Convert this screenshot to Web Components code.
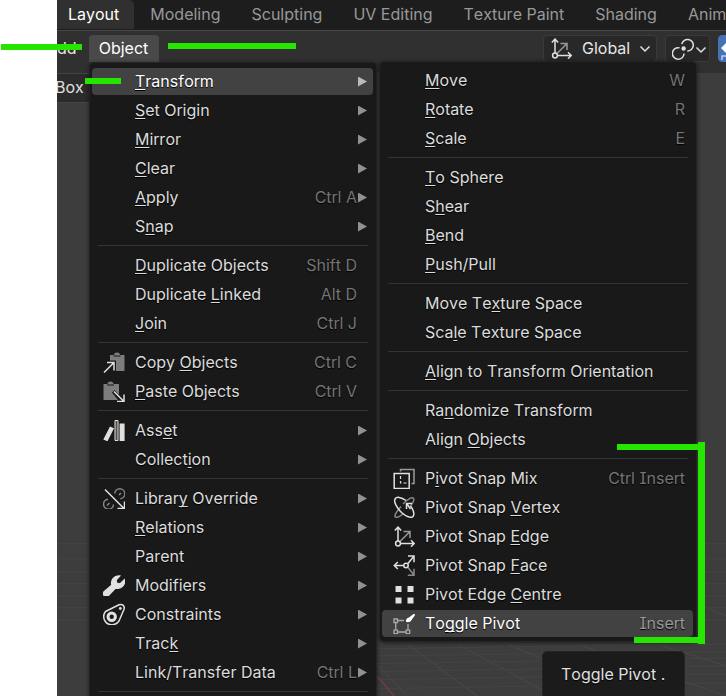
<!DOCTYPE html>
<html lang="en">
<head>
<meta charset="utf-8">
<title>Object menu</title>
<style>
  html, body { margin: 0; height: 100%; overflow: hidden; background: #fff; }
  body {
    font: 16px/20px Inter, "Noto Sans", sans-serif;
    font-kerning: none;
    color: #e0e0e0;
  }
</style>
</head>
<body>
<app-page></app-page>

<script>
const ICONS = {
  copy: `<path fill="#7d7d7d" stroke="none" d="M7 4h4q0-2.500 3-2.500t3 2.500h4.500v16H13V9.500H7z"/><path stroke="#191919" stroke-width="1" d="M10.500 5h7"/><path d="M1 21.500 11 11.500M4 11.500h7v8"/>`,
  paste: `<path fill="#7d7d7d" stroke="none" d="M.5 4h4q0-2.500 3-2.500t3 2.500H16v11l-4.500-5-2.500 2.500 6 7.500H.5z"/><path stroke="#191919" stroke-width="1" d="M4 5h7"/><path d="M11 11.500l10 10M14 21.500h7v-7"/>`,
  asset: `<path fill="#e0e0e0" stroke="none" d="M7 7.500l4 1.800L4.500 22.300.3 20.500zM16.600 4.500h5V22h-5z"/><path stroke-width="1" fill="#584c42" d="M12 1.500h3v20h-3z"/>`,
  library: `<g stroke="#858585"><path d="M11.800 6.500a5 5 0 1 1 5.500 5.300M16 8l2-2M10.500 17.500a5 5 0 1 1-5.500-5.300M4 18.500l2.500-2.500"/></g><path d="M2 2.500l19 19M14.500 21.500h7v-7"/>`,
  wrench: `<path fill="#e0e0e0" d="M1.400 21.600a2.600 2.600 0 0 1 0-4L9 11C7.500 6.500 11 1.500 16.500 2L13 6l.5 3.200L17 10l4.300-4c1.200 5-3.800 9.500-8.800 8L5.500 21.300a2.700 2.700 0 0 1-4.100.3z"/>`,
  constraint: `<path d="M2.500 8.500 16 1.800c3.500-1.300 6 1.300 5 4.500L16 18C12.500 23 5 23 2 18c-1.800-3.300-1.500-7 .5-9.500z"/><circle cx="8.700" cy="13.700" r="3.700" stroke-width="3"/><circle cx="17.300" cy="5.500" r="1.400" fill="#e0e0e0" stroke="none"/>`,
  mix: `<path stroke="#999" d="M7.500 4.500V2.500H21v14h-2.500"/><path d="M1.200 6.500h15v15h-15z"/><path stroke-dasharray="3 2" stroke-width="1.200" d="M7.500 9v7h7"/>`,
  vertex: `<path stroke="#888" d="M10 8C14 3.500 19 .5 20.500 2.500c1 1.500-1 5-3 7.500M8 10.500C4 15 .5 20 2.500 21c2 1 5-1 8-3.500"/><path d="M13 4.500C8 .8 3.500.5 2 3 .5 6 4 12 8.500 16.500 13 20.500 18 22.500 20 20.500c1.500-2 .8-6-2.500-10.500M14 8l3.500 5M13.500 13V7.500H19"/>`,
  axes: `<path stroke="#999" d="M7 16.500l9.500-9.500M10.500 6.500H17V13"/><path d="M5 16V2.500M1.800 5.500 5 2.200l3.200 3.300M7.500 18.500H21M18 15.300l3.200 3.200-3.200 3.200"/><circle cx="5" cy="18.500" r="2.400"/>`,
  face: `<path stroke="#888" d="M15 13.500l6 7.500M14.800 21.300H21v-6.500"/><path d="M10.800 11.500H1.500M4.800 8 1.300 11.500 4.800 15M14.700 9.700l6-7.200M15 2h6v6.300"/><circle cx="13" cy="11.500" r="2.200"/>`,
  squares: `<path fill="#e0e0e0" stroke="none" d="M2.500 3h6v6h-6zM14.500 3h6v6h-6zM2.500 14.500h6v6h-6zM14.500 14.500h6v6h-6z"/>`,
  toggle: `<g stroke="#aaa" stroke-width="1.300"><path d="M4.500 8.500H11M2.700 10.500v7.500M4.500 20H13M15 12v6"/><path d="M1 7h3.500v3.500H1zM1 18.200h3.500v3.500H1zM13.200 18.200h3.500v3.500h-3.500z"/></g><path fill="#fff" stroke="none" d="M13 9.800c-.5-2.300 1-3.800 3-4.300L20.500 2h1.300v1.500L18.500 8c-1 1.800-3.300 3-5.500 1.800z"/>`,
  pivot: `<path d="M9.800 6.200a5.800 5.800 0 1 1 5.500 6.800M7.500 9.800A5.800 5.800 0 1 0 12 15.500"/><circle cx="11.600" cy="10.500" r="2.200" fill="#e0e0e0" stroke="none"/>`,
  chevron: `<path d="M6.500 9.500l4.500 4.500 4.500-4.500"/>`,
  magnet: `<path fill="#fff" stroke="none" d="M2 10l5-5 6 6-5 5zM7 4l3-3 4 4-3 3z"/><path stroke="#b9ccec" d="M3 22v-4h8v4"/>`
};

const define = (name, html, setup) => {
  const template = document.createElement('template');
  template.innerHTML = html;
  customElements.define(name, class extends HTMLElement {
    constructor() {
      super();
      this.attachShadow({ mode: 'open' }).append(template.content.cloneNode(true));
    }
    connectedCallback() { if (setup) setup(this, this.shadowRoot); }
  });
};

define('ui-icon', `
  <style>
    :host { display: block; width: 22px; height: 22px; }
    svg { display: block; fill: none; stroke: #e0e0e0; stroke-width: 1.500; }
  </style>
  <svg viewBox="0 0 22 22" width="22" height="22" aria-hidden="true"></svg>`,
  (el, root) => { root.querySelector('svg').innerHTML = ICONS[el.getAttribute('name')] || ''; });

define('menu-item', `
  <style>
    :host { display: block; padding: 1px 0; }
    button {
      display: grid; grid-template-columns: 22px 1fr auto var(--arrow-column, 10px);
      align-items: center; width: 100%; height: 27px;
      padding: 0 6px 2px 11px; border: 0; border-radius: 4px;
      background: none; color: #dcdcdc; font: inherit; font-kerning: inherit;
      text-align: left; text-shadow: 0 1px 1px #000; white-space: nowrap;
    }
    :host([active]) button { background: #424242; color: #fff; }
    .label { padding-left: 10px; }
    .key { color: #747474; font-feature-settings: "cv08"; }
    :host([active]) .key { color: #999; }
    .arrow { justify-self: end; width: 9px; height: 10px; margin-top: 2px; background: #919191; clip-path: polygon(0 0, 100% 50%, 0 100%); }
    :host([active]) .arrow { background: #bbb; }
    :host(:not([submenu])) .arrow { visibility: hidden; }
    ::slotted(u) { text-decoration: underline 1px; text-decoration-skip-ink: none; text-underline-offset: 2px; }
  </style>
  <button type="button" role="menuitem"><ui-icon></ui-icon><span class="label"><slot></slot></span><span class="key"></span><span class="arrow"></span></button>`,
  (el, root) => {
    root.querySelector('.key').textContent = el.getAttribute('key') || '';
    const icon = root.querySelector('ui-icon');
    icon.setAttribute('name', el.getAttribute('icon') || '');
    icon.connectedCallback();
  });

define('menu-line', `
  <style>:host { display: block; height: 1px; margin: 4px 5px 5px 6px; background: #343434; }</style>`);

define('menu-panel', `
  <style>
    :host {
      display: block; box-sizing: border-box; padding: 4px 3px 3px 2px;
      background: #191919; border: 1px solid #242424; border-radius: 5px;
      box-shadow: 0 1px 4px #0008;
    }
    :host([flat]) { --arrow-column: 2px; }
  </style>
  <div role="menu"><slot></slot></div>`);

define('workspace-tab', `
  <style>
    :host { display: block; flex: none; }
    button {
      height: 29px; padding: 0 15px 2px; border: 0; border-radius: 5px 5px 0 0; background: none;
      color: #989898; font: inherit; font-kerning: inherit; white-space: nowrap;
    }
    :host([active]) button { background: #303030; color: #fff; }
  </style>
  <button type="button" role="tab"><slot></slot></button>`);

define('workspace-tabs', `
  <style>
    :host { display: flex; gap: 1px; height: 30px; background: #1d1d1d; overflow: hidden; }
    ::slotted(:first-child) { margin-left: -4px; }
  </style>
  <slot></slot>`);

define('view-header', `
  <style>
    :host { display: flex; align-items: flex-start; height: 38px; padding-top: 4px; background: #303030; border-top: 1px solid #484848; overflow: hidden; }
    nav { display: flex; gap: 1px; margin-left: -21px; }
    button, select { height: 27px; border: 0; color: #e6e6e6; font: inherit; font-kerning: inherit; }
    nav button { padding: 0 11px 2px 10px; background: none; border-radius: 4px 4px 0 0; }
    nav button.open { background: #494949; color: #fff; }
    .tools { display: flex; gap: 8px; margin-left: auto; margin-right: -20px; }
    .tools button, .orient { background: #282828; border: 1px solid #3a3a3a; border-radius: 4px; box-sizing: border-box; height: 27px; }
    .orient { display: grid; grid-template-columns: 22px 1fr 22px; align-items: center; padding: 0 0 2px 6px; }
    .orient > ui-icon, .orient select { grid-row: 1; }
    .orient ui-icon.first { grid-column: 1; }
    .orient ui-icon.last { grid-column: 3; pointer-events: none; }
    select { grid-column: 2 / 4; appearance: none; background: none; height: 23px; padding: 0 25px 0 10px; }
    .tools button { display: flex; align-items: center; padding: 0; }
    .tools .pivot { padding: 0 0 0 6px; width: 45px; overflow: hidden; }
    .pivot ui-icon + ui-icon { margin-left: -4px; }
    .tools .snap { background: #4772b3; border-color: #4772b3; width: 28px; }
  </style>
  <nav><button type="button">Add</button><button type="button" class="open" aria-haspopup="menu" aria-expanded="true">Object</button></nav>
  <div class="tools">
    <div class="orient">
      <ui-icon class="first" name="axes"></ui-icon>
      <select aria-label="Transform orientation"><option>Global</option></select>
      <ui-icon class="last" name="chevron"></ui-icon>
    </div>
    <button type="button" class="pivot" aria-label="Pivot point"><ui-icon name="pivot"></ui-icon><ui-icon name="chevron"></ui-icon></button>
    <button type="button" class="snap" aria-label="Snap"><ui-icon name="magnet"></ui-icon></button>
  </div>`);

define('view-port', `
  <style>
    :host { display: flex; flex-direction: column; min-height: 0; overflow: hidden; background: #3d3d3d; }
    .tool { display: flex; align-items: center; flex: none; width: 60px; height: 26px; padding-bottom: 2px; background: #2b2b2b; border: solid #454545; border-width: 1px 0; }
    .tool span { margin-left: -2px; }
    svg { flex: 1; min-height: 0; width: 100%; }
  </style>
  <div class="tool"><span>Box</span></div>
  <svg viewBox="0 0 669 592" preserveAspectRatio="none" fill="none" aria-hidden="true">
    <path stroke="#474747" d="M300 540l50 52M350 540l70 52M400 540l96 52M450 540l122 52M520 540l149 52M600 540l69 22M640 500l29 12"/>
    <path stroke="#444" d="M0 440h669M0 455h669M0 468h669M0 480h669M0 492h669M0 504h669M0 516h669M300 545l369-5M300 552l369-4M300 560l369-6M300 568l369-6M300 576l369-6M300 585l369-6"/>
    <path stroke="#8f3a44" d="M320 572l17 20"/>
  </svg>`);

define('tool-tip', `
  <style>:host { display: block; box-sizing: border-box; padding: 12px 19px 14px 18px; background: #1b1b1b; border: 1px solid #242424; border-radius: 5px; text-shadow: 0 1px 1px #000; white-space: nowrap; }</style>
  <slot></slot>`);

define('mark-stroke', `
  <style>:host { display: block; background: #26e600; }</style>`);

define('app-page', `
  <style>
    :host { display: grid; grid-template-columns: 57px 1fr; height: 100%; position: relative; overflow: hidden; }
    main { grid-column: 2; display: grid; grid-template-rows: auto auto 1fr; min-width: 0; min-height: 0; background: #303030; overflow: hidden; }
    menu-panel, tool-tip, mark-stroke { position: absolute; }
    .object { left: 89px; top: 62px; width: 288px; }
    .transform { left: 379px; top: 61px; width: 318px; }
    tool-tip { left: 542px; top: 651px; }
    .m1 { left: 1px; top: 44px; width: 81px; height: 6px; }
    .m2 { left: 168px; top: 43px; width: 128px; height: 6px; }
    .m3 { left: 85px; top: 78px; width: 36px; height: 6px; }
    .m4 { left: 617px; top: 444px; width: 84px; height: 6px; }
    .m5 { left: 698px; top: 442px; width: 7px; height: 202px; }
    .m6 { left: 634px; top: 637px; width: 66px; height: 6px; }
  </style>
  <main>
    <workspace-tabs role="tablist">
      <workspace-tab active>Layout</workspace-tab><workspace-tab>Modeling</workspace-tab><workspace-tab>Sculpting</workspace-tab><workspace-tab>UV Editing</workspace-tab><workspace-tab>Texture Paint</workspace-tab><workspace-tab>Shading</workspace-tab><workspace-tab>Animation</workspace-tab>
    </workspace-tabs>
    <view-header></view-header>
    <view-port></view-port>
  </main>
  <menu-panel class="object">
    <menu-item submenu active><u>T</u>ransform</menu-item>
    <menu-item submenu><u>S</u>et Origin</menu-item>
    <menu-item submenu><u>M</u>irror</menu-item>
    <menu-item submenu><u>C</u>lear</menu-item>
    <menu-item submenu key="Ctrl A"><u>A</u>pply</menu-item>
    <menu-item submenu>S<u>n</u>ap</menu-item>
    <menu-line></menu-line>
    <menu-item key="Shift D"><u>D</u>uplicate Objects</menu-item>
    <menu-item key="Alt D">Duplicate <u>L</u>inked</menu-item>
    <menu-item key="Ctrl J"><u>J</u>oin</menu-item>
    <menu-line></menu-line>
    <menu-item icon="copy" key="Ctrl C">Copy <u>O</u>bjects</menu-item>
    <menu-item icon="paste" key="Ctrl V"><u>P</u>aste Objects</menu-item>
    <menu-line></menu-line>
    <menu-item icon="asset" submenu>Ass<u>e</u>t</menu-item>
    <menu-item submenu>Collect<u>i</u>on</menu-item>
    <menu-line></menu-line>
    <menu-item icon="library" submenu>Librar<u>y</u> Override</menu-item>
    <menu-item submenu><u>R</u>elations</menu-item>
    <menu-item submenu>Parent</menu-item>
    <menu-item icon="wrench" submenu>Modifiers</menu-item>
    <menu-item icon="constraint" submenu>Constraints</menu-item>
    <menu-item submenu>Trac<u>k</u></menu-item>
    <menu-item submenu key="Ctrl L">Link/Transfer Data</menu-item>
    <menu-line></menu-line>
  </menu-panel>
  <menu-panel class="transform" flat>
    <menu-item key="W"><u>M</u>ove</menu-item>
    <menu-item key="R"><u>R</u>otate</menu-item>
    <menu-item key="E"><u>S</u>cale</menu-item>
    <menu-line></menu-line>
    <menu-item><u>T</u>o Sphere</menu-item>
    <menu-item>S<u>h</u>ear</menu-item>
    <menu-item><u>B</u>end</menu-item>
    <menu-item><u>P</u>ush/Pull</menu-item>
    <menu-line></menu-line>
    <menu-item>Move Te<u>x</u>ture Space</menu-item>
    <menu-item>Sca<u>l</u>e Texture Space</menu-item>
    <menu-line></menu-line>
    <menu-item><u>A</u>lign to Transform Orientation</menu-item>
    <menu-line></menu-line>
    <menu-item>Ra<u>n</u>domize Transform</menu-item>
    <menu-item>Align <u>O</u>bjects</menu-item>
    <menu-line></menu-line>
    <menu-item icon="mix" key="Ctrl Insert">P<u>i</u>vot Snap Mix</menu-item>
    <menu-item icon="vertex">Pivot Snap <u>V</u>ertex</menu-item>
    <menu-item icon="axes">Pivot Snap <u>E</u>dge</menu-item>
    <menu-item icon="face">Pivot Snap <u>F</u>ace</menu-item>
    <menu-item icon="squares">Pivot Edge <u>C</u>entre</menu-item>
    <menu-item icon="toggle" key="Insert" active>To<u>g</u>gle Pivot</menu-item>
  </menu-panel>
  <tool-tip role="tooltip">Toggle Pivot .</tool-tip>
  <mark-stroke class="m1"></mark-stroke><mark-stroke class="m2"></mark-stroke><mark-stroke class="m3"></mark-stroke>
  <mark-stroke class="m4"></mark-stroke><mark-stroke class="m5"></mark-stroke><mark-stroke class="m6"></mark-stroke>`);
</script>
</body>
</html>
